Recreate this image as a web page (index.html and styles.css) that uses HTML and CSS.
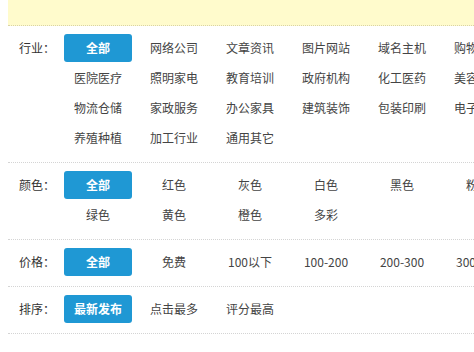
FILE: index.html
```html
<!DOCTYPE html>
<html lang="zh">
<head>
    <meta charset="UTF-8">
    <title>模板筛选</title>
    <link rel="stylesheet" href="styles.css">
</head>
<body>
    <div class="wrap">
        <div class="notice"></div>

        <div class="filter">
            <div class="filter-label">行业：</div>
            <ul class="filter-list">
                <li><a class="on" href="#">全部</a></li>
                <li><a href="#">网络公司</a></li>
                <li><a href="#">文章资讯</a></li>
                <li><a href="#">图片网站</a></li>
                <li><a href="#">域名主机</a></li>
                <li><a href="#">购物网站</a></li>
                <li><a href="#">企业网站</a></li>
                <li><a href="#">医院医疗</a></li>
                <li><a href="#">照明家电</a></li>
                <li><a href="#">教育培训</a></li>
                <li><a href="#">政府机构</a></li>
                <li><a href="#">化工医药</a></li>
                <li><a href="#">美容美发</a></li>
                <li><a href="#">餐饮美食</a></li>
                <li><a href="#">物流仓储</a></li>
                <li><a href="#">家政服务</a></li>
                <li><a href="#">办公家具</a></li>
                <li><a href="#">建筑装饰</a></li>
                <li><a href="#">包装印刷</a></li>
                <li><a href="#">电子科技</a></li>
                <li><a href="#">汽车服务</a></li>
                <li><a href="#">养殖种植</a></li>
                <li><a href="#">加工行业</a></li>
                <li><a href="#">通用其它</a></li>
            </ul>
        </div>

        <div class="filter">
            <div class="filter-label">颜色：</div>
            <ul class="filter-list">
                <li><a class="on" href="#">全部</a></li>
                <li><a href="#">红色</a></li>
                <li><a href="#">灰色</a></li>
                <li><a href="#">白色</a></li>
                <li><a href="#">黑色</a></li>
                <li><a href="#">粉色</a></li>
                <li><a href="#">蓝色</a></li>
                <li><a href="#">绿色</a></li>
                <li><a href="#">黄色</a></li>
                <li><a href="#">橙色</a></li>
                <li><a href="#">多彩</a></li>
            </ul>
        </div>

        <div class="filter">
            <div class="filter-label">价格：</div>
            <ul class="filter-list">
                <li><a class="on" href="#">全部</a></li>
                <li><a href="#">免费</a></li>
                <li><a href="#">100以下</a></li>
                <li><a href="#">100-200</a></li>
                <li><a href="#">200-300</a></li>
                <li><a href="#">300以上</a></li>
            </ul>
        </div>

        <div class="filter">
            <div class="filter-label">排序：</div>
            <ul class="filter-list">
                <li><a class="on" href="#">最新发布</a></li>
                <li><a href="#">点击最多</a></li>
                <li><a href="#">评分最高</a></li>
            </ul>
        </div>
    </div>
</body>
</html>
```

FILE: styles.css
```css
html, body {
    overflow: hidden;
}

body {
    margin: 0 0 0 8px;
    font-family: "Noto Sans CJK SC", "DejaVu Sans", sans-serif;
    font-size: 12px;
    color: #333;
    background: #fff;
}

.wrap {
    width: 620px;
}

.notice {
    height: 25px;
    background: #fffbcc;
    border-bottom: 1px dotted #d9d3a6;
}

.filter {
    display: flex;
    padding: 7px 0 9px;
    border-bottom: 1px dotted #d4d4d4;
}

.filter-label {
    flex: none;
    width: 41px;
    padding-left: 11px;
    line-height: 30px;
    color: #333;
}

.filter-list {
    display: flex;
    flex-wrap: wrap;
    width: 532px;
    margin: 0;
    padding: 0;
    list-style: none;
}

.filter-list li {
    width: 76px;
    height: 30px;
    line-height: 30px;
    text-align: center;
}

.filter-list a {
    display: block;
    color: #444;
    text-decoration: none;
}

.filter-list a.on {
    margin: 1px 4px;
    height: 28px;
    line-height: 28px;
    background: #1f98d4;
    border-radius: 3px;
    color: #fff;
    font-weight: bold;
}
```
